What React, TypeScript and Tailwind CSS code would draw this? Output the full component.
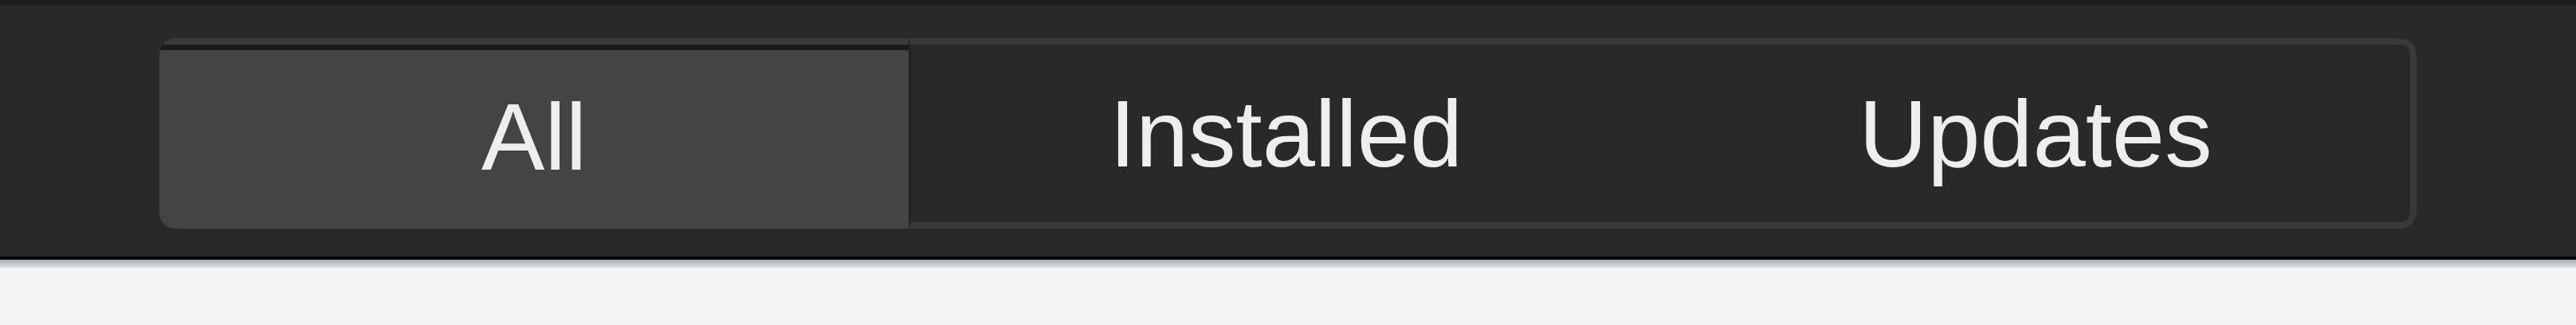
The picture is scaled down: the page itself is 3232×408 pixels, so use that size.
import { useState } from "react";

const tabs = ["All", "Installed", "Updates"];

export default function App() {
    const [active, setActive] = useState(0);

    return <div className="w-full h-[408px] flex flex-col bg-[#f4f5f7] font-['Liberation_Sans',Arial,sans-serif]">
        <div className="h-[7px] bg-[#1e1e1e]" />
        <div className="h-[315px] bg-[#2a292a] pt-[41px] pl-[200px]">
            <div className="flex w-[2832px] h-[239px] rounded-[20px] overflow-hidden">
                {tabs.map((tab, i) => <button
                    key={tab}
                    onClick={() => setActive(i)}
                    className={`${active === i
                        ? "bg-[#454443] border-t-[8px] border-[#3b3a3b] shadow-[inset_0_7px_0_#1b1a1b]"
                        : "bg-[#2a292a] border-t-[8px] border-b-[8px] border-[#3b3a3b]"} ${i === tabs.length - 1 ? "border-r-[8px] rounded-r-[20px]" : ""} ${i === 1 && active === 0 ? "border-l-[3px] border-l-[#242324]" : ""} flex-1 flex items-center justify-center text-[119px] leading-none text-[#eeeeee]`}>
                    {tab}
                </button>)}
            </div>
        </div>
        <div className="h-[4px] bg-black" />
        <div className="h-[11px] bg-linear-to-b from-[#a3a9af] to-[#e8eaec]" />
        <div className="flex-1 bg-[#f4f5f7]" />
    </div>
}
